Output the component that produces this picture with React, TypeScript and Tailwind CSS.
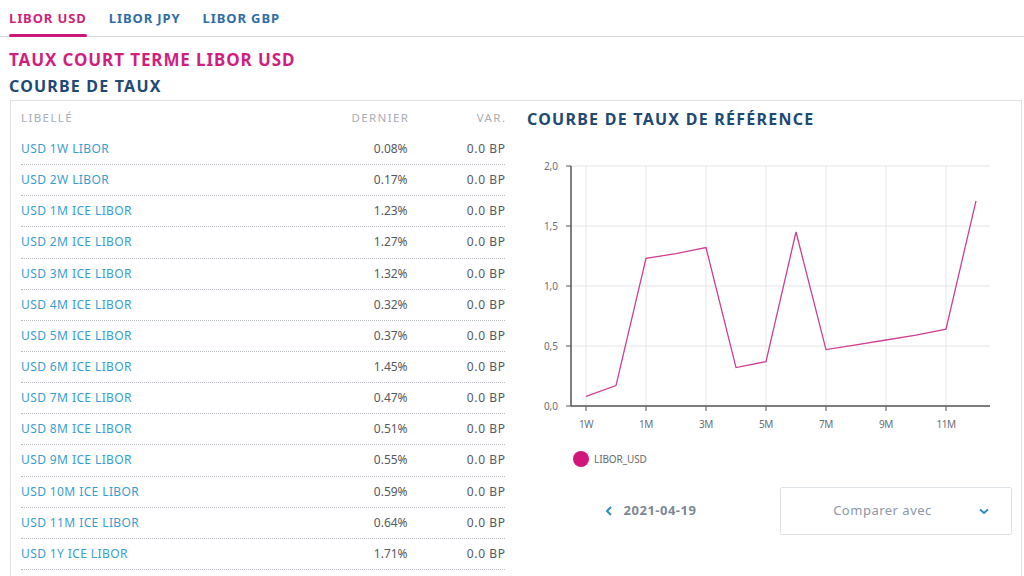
import React from "react";

const rows: [string, string][] = [
  ["USD 1W LIBOR", "0.08%"],
  ["USD 2W LIBOR", "0.17%"],
  ["USD 1M ICE LIBOR", "1.23%"],
  ["USD 2M ICE LIBOR", "1.27%"],
  ["USD 3M ICE LIBOR", "1.32%"],
  ["USD 4M ICE LIBOR", "0.32%"],
  ["USD 5M ICE LIBOR", "0.37%"],
  ["USD 6M ICE LIBOR", "1.45%"],
  ["USD 7M ICE LIBOR", "0.47%"],
  ["USD 8M ICE LIBOR", "0.51%"],
  ["USD 9M ICE LIBOR", "0.55%"],
  ["USD 10M ICE LIBOR", "0.59%"],
  ["USD 11M ICE LIBOR", "0.64%"],
  ["USD 1Y ICE LIBOR", "1.71%"],
];

const values = [0.08, 0.17, 1.23, 1.27, 1.32, 0.32, 0.37, 1.45, 0.47, 0.51, 0.55, 0.59, 0.64, 1.71];

function Chart() {
  const ax = 44;
  const top = 15;
  const bottom = 255;
  const right = 463;
  const px = (i: number) => 59 + 30 * i;
  const py = (v: number) => bottom - 120 * v;
  const pts = values.map((v, i) => `${px(i)},${py(v)}`).join(" ");
  const yTicks = [0, 0.5, 1, 1.5, 2];
  const xTicks = [
    [0, "1W"],
    [2, "1M"],
    [4, "3M"],
    [6, "5M"],
    [8, "7M"],
    [10, "9M"],
    [12, "11M"],
  ] as [number, string][];
  return (
    <svg width="470" height="290" className="block">
      {yTicks.map((t) => (
        <g key={t}>
          <line x1={ax} x2={right} y1={py(t)} y2={py(t)} stroke="#e3e5e8" strokeWidth="1" />
          <line x1={ax - 5} x2={ax} y1={py(t)} y2={py(t)} stroke="#555" strokeWidth="1" />
          <text x={31} y={py(t) + 3.5} textAnchor="end" fontSize="10" fill="#6b6f75" fontFamily="'Noto Sans', sans-serif">
            {t.toFixed(1).replace(".", ",")}
          </text>
        </g>
      ))}
      {xTicks.map(([i, l]) => (
        <g key={l}>
          <line x1={px(i)} x2={px(i)} y1={top} y2={bottom} stroke="#e3e5e8" strokeWidth="1" />
          <line x1={px(i)} x2={px(i)} y1={bottom} y2={bottom + 5} stroke="#555" strokeWidth="1" />
          <text x={px(i)} y={bottom + 22} textAnchor="middle" fontSize="10" fill="#6b6f75" fontFamily="'Noto Sans', sans-serif" letterSpacing="-0.5">
            {l}
          </text>
        </g>
      ))}
      <line x1={ax} x2={ax} y1={top} y2={bottom} stroke="#555" strokeWidth="1.5" />
      <line x1={ax} x2={right} y1={bottom} y2={bottom} stroke="#555" strokeWidth="1.5" />
      <polyline points={pts} fill="none" stroke="#cf3f93" strokeWidth="1.3" />
    </svg>
  );
}

export default function App() {
  return (
    <div className="w-[1024px] h-[576px] overflow-hidden bg-white" style={{ fontFamily: "'Noto Sans', sans-serif" }}>
      <div className="flex h-[37px] border-b border-[#d7dbe0] pl-[9px] pt-[2px] gap-[22px]">
        <div className="relative flex items-center text-[13px] font-bold text-[#cf1f7d] tracking-[0.9px]">
          LIBOR USD
          <div className="absolute left-0 right-0 bottom-[-1px] h-[3px] bg-[#c8187a] rounded-sm" />
        </div>
        <div className="flex items-center text-[13px] font-bold text-[#2f6da8] tracking-[0.9px]">LIBOR JPY</div>
        <div className="flex items-center text-[13px] font-bold text-[#2f6da8] tracking-[0.9px]">LIBOR GBP</div>
      </div>
      <div className="pl-[9px] pt-[12px] text-[17px] leading-[22px] font-bold text-[#d11f7e] tracking-[0.9px]">TAUX COURT TERME LIBOR USD</div>
      <div className="pl-[9px] pt-[5px] text-[16px] leading-[20px] font-bold text-[#1f4a74] tracking-[1.2px]">COURBE DE TAUX</div>
      <div className="ml-[10px] mt-[4px] w-[1012px] h-[600px] border border-[#dde2e7] flex">
        <div className="w-[494px] shrink-0 pl-[10px]">
          <div className="flex items-center h-[33px] text-[11.5px] text-[#a7adb4] tracking-[1.4px]">
            <div className="flex-1">LIBELLÉ</div>
            <div className="w-[100px] text-right mr-[-1px]">DERNIER</div>
            <div className="w-[98px] text-right mr-[-1.4px]">VAR.</div>
          </div>
          {rows.map(([l, v]) => (
            <div key={l} className="flex items-center h-[31.15px] border-b border-dotted border-[#b9bec4] text-[12px]">
              <div className="flex-1 text-[#3a9dd0] tracking-[0.4px]">{l}</div>
              <div className="w-[100px] text-right text-[#555a60]">{v}</div>
              <div className="w-[98px] text-right text-[#555a60] tracking-[0.6px] mr-[-0.6px]">0.0 BP</div>
            </div>
          ))}
        </div>
        <div className="flex-1 min-w-0 pl-[22px] pr-[9px] pt-[8px]">
          <div className="h-[20px] text-[16px] leading-[20px] font-bold text-[#1f4a74] tracking-[1.25px] whitespace-nowrap">COURBE DE TAUX DE RÉFÉRENCE</div>
          <div className="mt-[22px]">
            <Chart />
          </div>
          <div className="flex items-center h-[20px] mt-[8px] pl-[46px]">
            <div className="w-[16px] h-[16px] rounded-full bg-[#d1157a]" />
            <div className="ml-[5px] text-[10px] text-[#666b70] tracking-[-0.1px]">LIBOR_USD</div>
          </div>
          <div className="flex mt-[18px]">
            <div className="w-[253px] shrink-0 flex items-center justify-center gap-[11px] pr-[6px]">
              <svg width="8" height="10" viewBox="0 0 8 10">
                <path d="M6 1 L2 5 L6 9" fill="none" stroke="#2f8fc8" strokeWidth="2" />
              </svg>
              <div className="text-[13px] font-bold text-[#7d8893] tracking-[0.5px]">2021-04-19</div>
            </div>
            <div className="w-[232px] shrink-0 h-[48px] border border-[#dde2e7] rounded-[2px] flex items-center relative">
              <div className="flex-1 text-center text-[13px] text-[#8d98a4] tracking-[0.5px] pr-[27px]">Comparer avec</div>
              <svg className="absolute right-[22px] top-[20px]" width="10" height="7" viewBox="0 0 10 7">
                <path d="M1 1.5 L5 5 L9 1.5" fill="none" stroke="#2f8fc8" strokeWidth="2" />
              </svg>
            </div>
          </div>
        </div>
      </div>
    </div>
  );
}
